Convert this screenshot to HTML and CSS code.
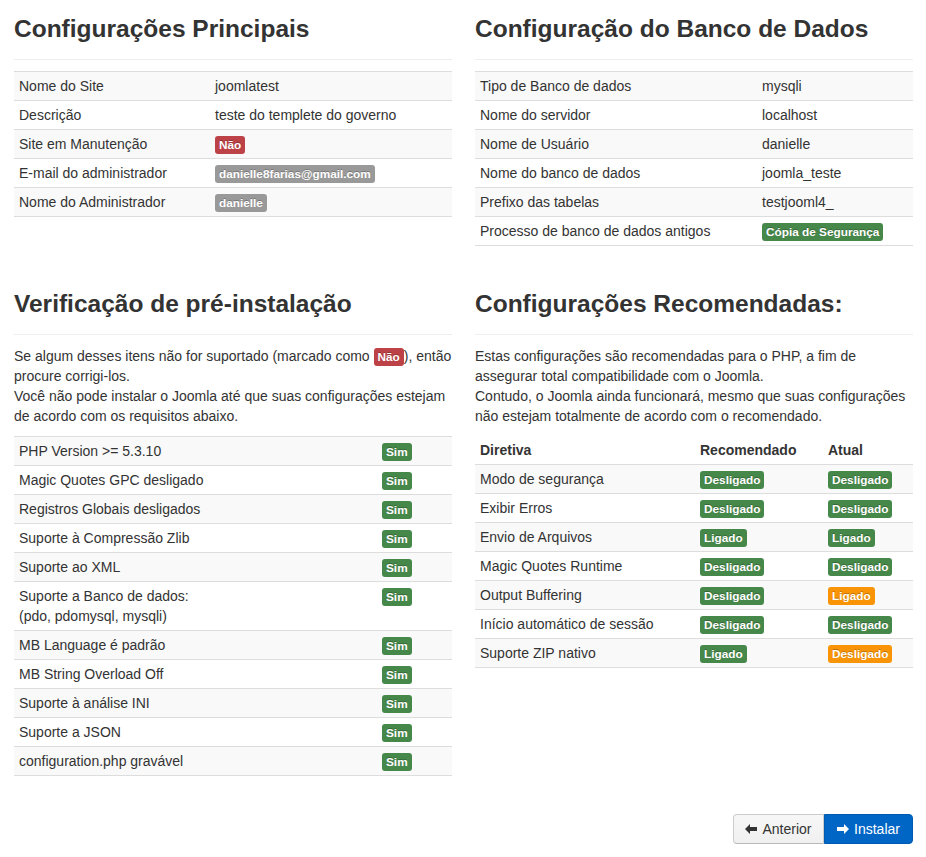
FILE: index.html
```html
<!DOCTYPE html>
<html lang="pt-BR">
<head>
<meta charset="utf-8">
<title>Instalação Joomla</title>
<link rel="stylesheet" href="styles.css">
</head>
<body>
<div class="page">
  <div class="row row-first">
    <section class="col">
      <h3>Configurações Principais</h3>
      <hr>
      <table class="table">
        <colgroup><col class="c-196"><col></colgroup>
        <tbody>
          <tr><td>Nome do Site</td><td>joomlatest</td></tr>
          <tr><td>Descrição</td><td>teste do templete do governo</td></tr>
          <tr><td>Site em Manutenção</td><td><span class="label label-important">Não</span></td></tr>
          <tr><td>E-mail do administrador</td><td><span class="label">danielle8farias@gmail.com</span></td></tr>
          <tr><td>Nome do Administrador</td><td><span class="label">danielle</span></td></tr>
        </tbody>
      </table>
    </section>
    <section class="col">
      <h3>Configuração do Banco de Dados</h3>
      <hr>
      <table class="table">
        <colgroup><col class="c-282"><col></colgroup>
        <tbody>
          <tr><td>Tipo de Banco de dados</td><td>mysqli</td></tr>
          <tr><td>Nome do servidor</td><td>localhost</td></tr>
          <tr><td>Nome de Usuário</td><td>danielle</td></tr>
          <tr><td>Nome do banco de dados</td><td>joomla_teste</td></tr>
          <tr><td>Prefixo das tabelas</td><td>testjooml4_</td></tr>
          <tr><td>Processo de banco de dados antigos</td><td><span class="label label-success">Cópia de Segurança</span></td></tr>
        </tbody>
      </table>
    </section>
  </div>

  <div class="row row-second">
    <section class="col">
      <h3>Verificação de pré-instalação</h3>
      <hr>
      <p>Se algum desses itens não for suportado (marcado como <span class="label label-important">Não</span>), então procure corrigi-los.<br>Você não pode instalar o Joomla até que suas configurações estejam de acordo com os requisitos abaixo.</p>
      <table class="table">
        <colgroup><col class="c-363"><col></colgroup>
        <tbody>
          <tr><td>PHP Version &gt;= 5.3.10</td><td><span class="label label-success">Sim</span></td></tr>
          <tr><td>Magic Quotes GPC desligado</td><td><span class="label label-success">Sim</span></td></tr>
          <tr><td>Registros Globais desligados</td><td><span class="label label-success">Sim</span></td></tr>
          <tr><td>Suporte à Compressão Zlib</td><td><span class="label label-success">Sim</span></td></tr>
          <tr><td>Suporte ao XML</td><td><span class="label label-success">Sim</span></td></tr>
          <tr><td>Suporte a Banco de dados:<br>(pdo, pdomysql, mysqli)</td><td><span class="label label-success">Sim</span></td></tr>
          <tr><td>MB Language é padrão</td><td><span class="label label-success">Sim</span></td></tr>
          <tr><td>MB String Overload Off</td><td><span class="label label-success">Sim</span></td></tr>
          <tr><td>Suporte à análise INI</td><td><span class="label label-success">Sim</span></td></tr>
          <tr><td>Suporte a JSON</td><td><span class="label label-success">Sim</span></td></tr>
          <tr><td>configuration.php gravável</td><td><span class="label label-success">Sim</span></td></tr>
        </tbody>
      </table>
    </section>
    <section class="col">
      <h3>Configurações Recomendadas:</h3>
      <hr>
      <p>Estas configurações são recomendadas para o PHP, a fim de assegurar total compatibilidade com o Joomla.<br>Contudo, o Joomla ainda funcionará, mesmo que suas configurações não estejam totalmente de acordo com o recomendado.</p>
      <table class="table">
        <colgroup><col class="c-220"><col class="c-128"><col></colgroup>
        <thead>
          <tr><th>Diretiva</th><th>Recomendado</th><th>Atual</th></tr>
        </thead>
        <tbody>
          <tr><td>Modo de segurança</td><td><span class="label label-success">Desligado</span></td><td><span class="label label-success">Desligado</span></td></tr>
          <tr><td>Exibir Erros</td><td><span class="label label-success">Desligado</span></td><td><span class="label label-success">Desligado</span></td></tr>
          <tr><td>Envio de Arquivos</td><td><span class="label label-success">Ligado</span></td><td><span class="label label-success">Ligado</span></td></tr>
          <tr><td>Magic Quotes Runtime</td><td><span class="label label-success">Desligado</span></td><td><span class="label label-success">Desligado</span></td></tr>
          <tr><td>Output Buffering</td><td><span class="label label-success">Desligado</span></td><td><span class="label label-warning">Ligado</span></td></tr>
          <tr><td>Início automático de sessão</td><td><span class="label label-success">Desligado</span></td><td><span class="label label-success">Desligado</span></td></tr>
          <tr><td>Suporte ZIP nativo</td><td><span class="label label-success">Ligado</span></td><td><span class="label label-warning">Desligado</span></td></tr>
        </tbody>
      </table>
    </section>
  </div>

  <div class="actions">
    <div class="btn-group">
      <a class="btn" href="#"><svg class="icon" viewBox="0 0 12 10" width="12" height="10"><path d="M0 5 L5 0 L5 3 L12 3 L12 7 L5 7 L5 10 Z" fill="#333"/></svg>Anterior</a>
      <a class="btn btn-primary" href="#"><svg class="icon" viewBox="0 0 12 10" width="12" height="10"><path d="M12 5 L7 0 L7 3 L0 3 L0 7 L7 7 L7 10 Z" fill="#fff"/></svg>Instalar</a>
    </div>
  </div>
</div>
</body>
</html>
```

FILE: styles.css
```css
html, body {
  margin: 0;
  padding: 0;
  background: #fff;
}

body {
  font-family: "Liberation Sans", Arial, Helvetica, sans-serif;
  font-size: 14px;
  line-height: 20px;
  color: #333;
}

.page {
  padding: 0 13px 0 14px;
}

.row {
  display: grid;
  grid-template-columns: 438px 438px;
  column-gap: 23px;
  align-items: start;
}

.row-first {
  padding-top: 16px;
}

.row-second {
  margin-top: 45px;
}

h3 {
  margin: 0;
  font-size: 24.5px;
  line-height: 26px;
  font-weight: bold;
  color: #333;
}

hr {
  margin: 17px 0 11px;
  border: 0;
  border-top: 1px solid #eee;
  height: 0;
}

p {
  margin: 0 0 10px;
}

p .label {
  margin: -2px 0;
}

.table {
  width: 100%;
  border-collapse: collapse;
  border-spacing: 0;
  table-layout: fixed;
}

.c-196 { width: 196px; }
.c-282 { width: 282px; }
.c-363 { width: 363px; }
.c-220 { width: 220px; }
.c-128 { width: 128px; }

.table td,
.table th {
  padding: 4px 5px;
  line-height: 20px;
  text-align: left;
  vertical-align: top;
  border-top: 1px solid #ddd;
}

.table tbody tr:last-child td {
  border-bottom: 1px solid #ddd;
}

.table thead th {
  border-top: 0;
  font-weight: bold;
  vertical-align: bottom;
}

.table tbody tr:nth-child(odd) td {
  background: #f9f9f9;
}

.label {
  display: inline-block;
  padding: 2px 4px;
  font-size: 11.8px;
  font-weight: bold;
  line-height: 14px;
  color: #fff;
  vertical-align: baseline;
  white-space: nowrap;
  text-shadow: 0 -1px 0 rgba(0, 0, 0, 0.25);
  background-color: #999;
  border-radius: 3px;
}

.label-important { background-color: #bd4247; }
.label-success { background-color: #46874a; }
.label-warning { background-color: #f89406; }

.actions {
  display: flex;
  justify-content: flex-end;
  margin-top: 38px;
  padding-bottom: 14px;
}

.btn-group {
  display: flex;
}

.btn {
  display: inline-flex;
  align-items: center;
  gap: 5px;
  box-sizing: border-box;
  height: 30px;
  padding: 4px 12px;
  font-size: 14px;
  line-height: 20px;
  color: #333;
  text-decoration: none;
  background: linear-gradient(#f7f7f7, #f0f0f0);
  border: 1px solid #ccc;
  border-bottom-color: #b8b8b8;
}

.btn:first-child {
  border-radius: 4px 0 0 4px;
  width: 91px;
  justify-content: center;
}

.btn:last-child {
  border-radius: 0 4px 4px 0;
  width: 89px;
  justify-content: center;
}

.btn-primary {
  color: #fff;
  background: #0066c6;
  border-color: #005bb0;
}

.icon {
  display: block;
  flex: none;
}
```
